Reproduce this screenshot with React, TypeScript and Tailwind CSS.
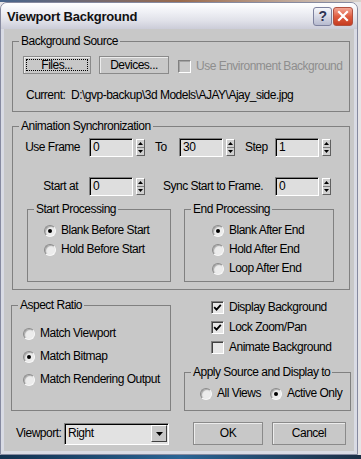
import type { ReactNode } from "react"

function Group({ label, className = "", children }: { label: string; className?: string; children?: ReactNode }) {
  return (
    <div className={`relative shrink-0 border border-[#808080] ${className}`}>
      <span className="absolute -top-[8px] left-[6px] whitespace-nowrap bg-[#c8c8c8] px-[2px] leading-[15px]">{label}</span>
      {children}
    </div>
  )
}

function Radio({ on }: { on?: boolean }) {
  return (
    <span className="flex size-[12px] shrink-0 items-center justify-center rounded-full border border-t-[#8a8a8a] border-l-[#8a8a8a] border-b-[#f8f8f8] border-r-[#f8f8f8] bg-[#ececec] shadow-[inset_1px_1px_1px_#a8a8a8]">
      {on && <span className="size-[4px] rounded-full bg-black" />}
    </span>
  )
}

function Check({ on, disabled }: { on?: boolean; disabled?: boolean }) {
  return (
    <span
      className={`flex size-[13px] shrink-0 items-center justify-center border border-t-[#808080] border-l-[#808080] border-b-white border-r-white ${
        disabled ? "bg-[#c8c8c8] shadow-[inset_1px_1px_0_#a4a4a4]" : "bg-[#e6e6e6] shadow-[inset_1px_1px_0_#404040]"
      }`}
    >
      {on && (
        <svg width="9" height="9" viewBox="0 0 9 9">
          <path d="M1.2 4.2 L3.5 6.6 L7.8 1.8" stroke="#000" strokeWidth="1.8" fill="none" />
        </svg>
      )}
    </span>
  )
}

function Option({ on, label, box = "radio" }: { on?: boolean; label: string; box?: "radio" | "check" }) {
  return (
    <div className="flex h-[19px] items-center gap-[5px] whitespace-nowrap">
      {box === "radio" ? <Radio on={on} /> : <Check on={on} />}
      <span>{label}</span>
    </div>
  )
}

function Field({ value }: { value: string }) {
  return (
    <span className="flex h-[19px] w-[44px] shrink-0 items-center border border-t-[#808080] border-l-[#808080] border-b-white border-r-white bg-[#dedede] pl-[3px] shadow-[inset_1px_1px_0_#000]">
      {value}
    </span>
  )
}

function Spinner() {
  return (
    <span className="ml-[3px] flex h-[17px] w-[9px] shrink-0 flex-col border border-t-white border-l-white border-b-[#606060] border-r-[#606060] bg-[#d0d0d0]">
      <span className="flex flex-1 items-center justify-center border-b border-[#808080]">
        <svg width="5" height="3" viewBox="0 0 5 3">
          <path d="M2.5 0 L5 3 L0 3Z" fill="#000" />
        </svg>
      </span>
      <span className="flex flex-1 items-center justify-center">
        <svg width="5" height="3" viewBox="0 0 5 3">
          <path d="M0 0 L5 0 L2.5 3Z" fill="#000" />
        </svg>
      </span>
    </span>
  )
}

function Btn({ children, className = "", focus }: { children: ReactNode; className?: string; focus?: boolean }) {
  return (
    <span className={`flex shrink-0 border border-[#8a8a8a] bg-[#c8c8c8] p-[2px] shadow-[inset_1px_1px_0_#ececec] ${className}`}>
      <span className={`flex flex-1 items-center justify-center border ${focus ? "border-dotted border-black" : "border-transparent"}`}>
        {children}
      </span>
    </span>
  )
}

function TitleBar() {
  return (
    <div className="flex h-[26px] shrink-0 items-center rounded-t-[6px] bg-[linear-gradient(to_bottom,#ffffff_0%,#eff0f5_35%,#dfe0e8_70%,#cbccd8_100%)] pl-[6px] pr-[4px]">
      <span className="flex-1 text-[13px] font-bold tracking-[-0.2px] text-[#111]">Viewport Background</span>
      <span className="flex h-[19px] w-[19px] items-center justify-center rounded-[3px] border border-[#7d819e] bg-gradient-to-b from-[#f6f7fb] to-[#b7bbcf] text-[14px] font-bold text-[#2f3454]">
        ?
      </span>
      <span className="ml-[1px] flex h-[19px] w-[20px] items-center justify-center rounded-[3px] border border-[#b0503f] bg-gradient-to-b from-[#f2a593] via-[#de5c40] to-[#c63a20]">
        <svg width="12" height="12" viewBox="0 0 12 12">
          <path d="M2 2 L10 10 M10 2 L2 10" stroke="#fff" strokeWidth="2.2" strokeLinecap="square" />
        </svg>
      </span>
    </div>
  )
}

export default function App() {
  return (
    <div className="flex h-[459px] w-[361px] flex-col overflow-hidden bg-[#e6e4e6] font-['Liberation_Sans',Arial,sans-serif] text-[12px] leading-[15px] tracking-[-0.5px] text-black">
      <div className="h-[2px] shrink-0 bg-gradient-to-r from-[#46648c] via-[#9a6a4c] to-[#d8d2cc]" />
      <div className="flex h-[453px] w-[358px] shrink-0 flex-col rounded-t-[7px] border border-[#868aa0] bg-[#d9dbe4]">
        <TitleBar />
        <div className="flex flex-1 flex-col px-[3px] pb-[3px]">
          <div className="flex flex-1 flex-col bg-[#c8c8c8] pl-[8px] pr-[4px]">
            {/* background source */}
            <Group label="Background Source" className="mt-[12px] h-[71px] w-[338px]">
              <div className="flex items-end pl-[10px] pt-[14px]">
                <Btn focus className="h-[18px] w-[68px]">Files...</Btn>
                <Btn className="ml-[8px] h-[18px] w-[70px]">Devices...</Btn>
                <span className="ml-[9px] flex items-center gap-[5px] whitespace-nowrap text-[#8e8e8e]">
                  <Check disabled />
                  <span>Use Environment Background</span>
                </span>
              </div>
              <div className="mt-[14px] whitespace-pre pl-[13px]">{"Current:  D:\\gvp-backup\\3d Models\\AJAY\\Ajay_side.jpg"}</div>
            </Group>

            {/* animation sync */}
            <Group label="Animation Synchronization" className="mt-[14px] h-[164px] w-[338px]">
              <div className="mt-[11px] flex h-[19px] items-center">
                <span className="w-[76px] pr-[9px] text-right">Use Frame</span>
                <Field value="0" />
                <Spinner />
                <span className="w-[34px] pl-[10px]">To</span>
                <Field value="30" />
                <Spinner />
                <span className="w-[40px] pl-[10px]">Step</span>
                <Field value="1" />
                <Spinner />
              </div>
              <div className="mt-[20px] flex h-[19px] items-center">
                <span className="w-[76px] pr-[11px] text-right">Start at</span>
                <Field value="0" />
                <Spinner />
                <span className="w-[130px] whitespace-nowrap pr-[12px] text-right">Sync Start to Frame.</span>
                <Field value="0" />
                <Spinner />
              </div>
              <div className="mt-[13px] flex gap-[13px] pl-[14px]">
                <Group label="Start Processing" className="h-[73px] w-[144px]">
                  <div className="flex flex-col pl-[16px] pt-[11px]">
                    <Option on label="Blank Before Start" />
                    <Option label="Hold Before Start" />
                  </div>
                </Group>
                <Group label="End Processing" className="h-[73px] w-[150px]">
                  <div className="flex flex-col pl-[27px] pt-[11px]">
                    <Option on label="Blank After End" />
                    <Option label="Hold After End" />
                    <Option label="Loop After End" />
                  </div>
                </Group>
              </div>
            </Group>

            {/* aspect + display */}
            <div className="flex">
              <Group label="Aspect Ratio" className="-ml-px mt-[15px] h-[106px] w-[160px]">
                <div className="flex flex-col gap-[4px] pl-[11px] pt-[18px]">
                  <Option label="Match Viewport" />
                  <Option on label="Match Bitmap" />
                  <Option label="Match Rendering Output" />
                </div>
              </Group>
              <div className="ml-[13px] flex w-[167px] flex-col pt-[8px]">
                <div className="flex flex-col gap-[1px] pl-[27px]">
                  <Option box="check" on label="Display Background" />
                  <Option box="check" on label="Lock Zoom/Pan" />
                  <Option box="check" label="Animate Background" />
                </div>
                <Group label="Apply Source and Display to" className="mt-[15px] h-[39px] w-[167px]">
                  <div className="flex pl-[15px] pt-[11px]">
                    <div className="w-[70px]">
                      <Option label="All Views" />
                    </div>
                    <Option on label="Active Only" />
                  </div>
                </Group>
              </div>
            </div>

            {/* bottom row */}
            <div className="mt-[11px] flex h-[23px] items-center">
              <span className="w-[52px] pl-[4px]">Viewport:</span>
              <span className="flex h-[22px] w-[105px] items-center border border-t-[#808080] border-l-[#808080] border-b-white border-r-white bg-[#e2e2e2] pl-[3px] pr-[1px] shadow-[inset_1px_1px_0_#000]">
                <span className="flex-1">Right</span>
                <span className="flex h-[17px] w-[16px] items-center justify-center border border-t-white border-l-white border-b-[#404040] border-r-[#404040] bg-[#c8c8c8]">
                  <svg width="7" height="4" viewBox="0 0 7 4">
                    <path d="M0 0 H7 L3.5 4Z" fill="#000" />
                  </svg>
                </span>
              </span>
              <Btn className="ml-[24px] h-[23px] w-[70px]">OK</Btn>
              <Btn className="ml-[9px] h-[23px] w-[74px]">Cancel</Btn>
            </div>
          </div>
        </div>
      </div>
      <div className="flex-1 bg-gradient-to-r from-[#123150] via-[#2a6496] to-[#1b2f46]" />
    </div>
  )
}
